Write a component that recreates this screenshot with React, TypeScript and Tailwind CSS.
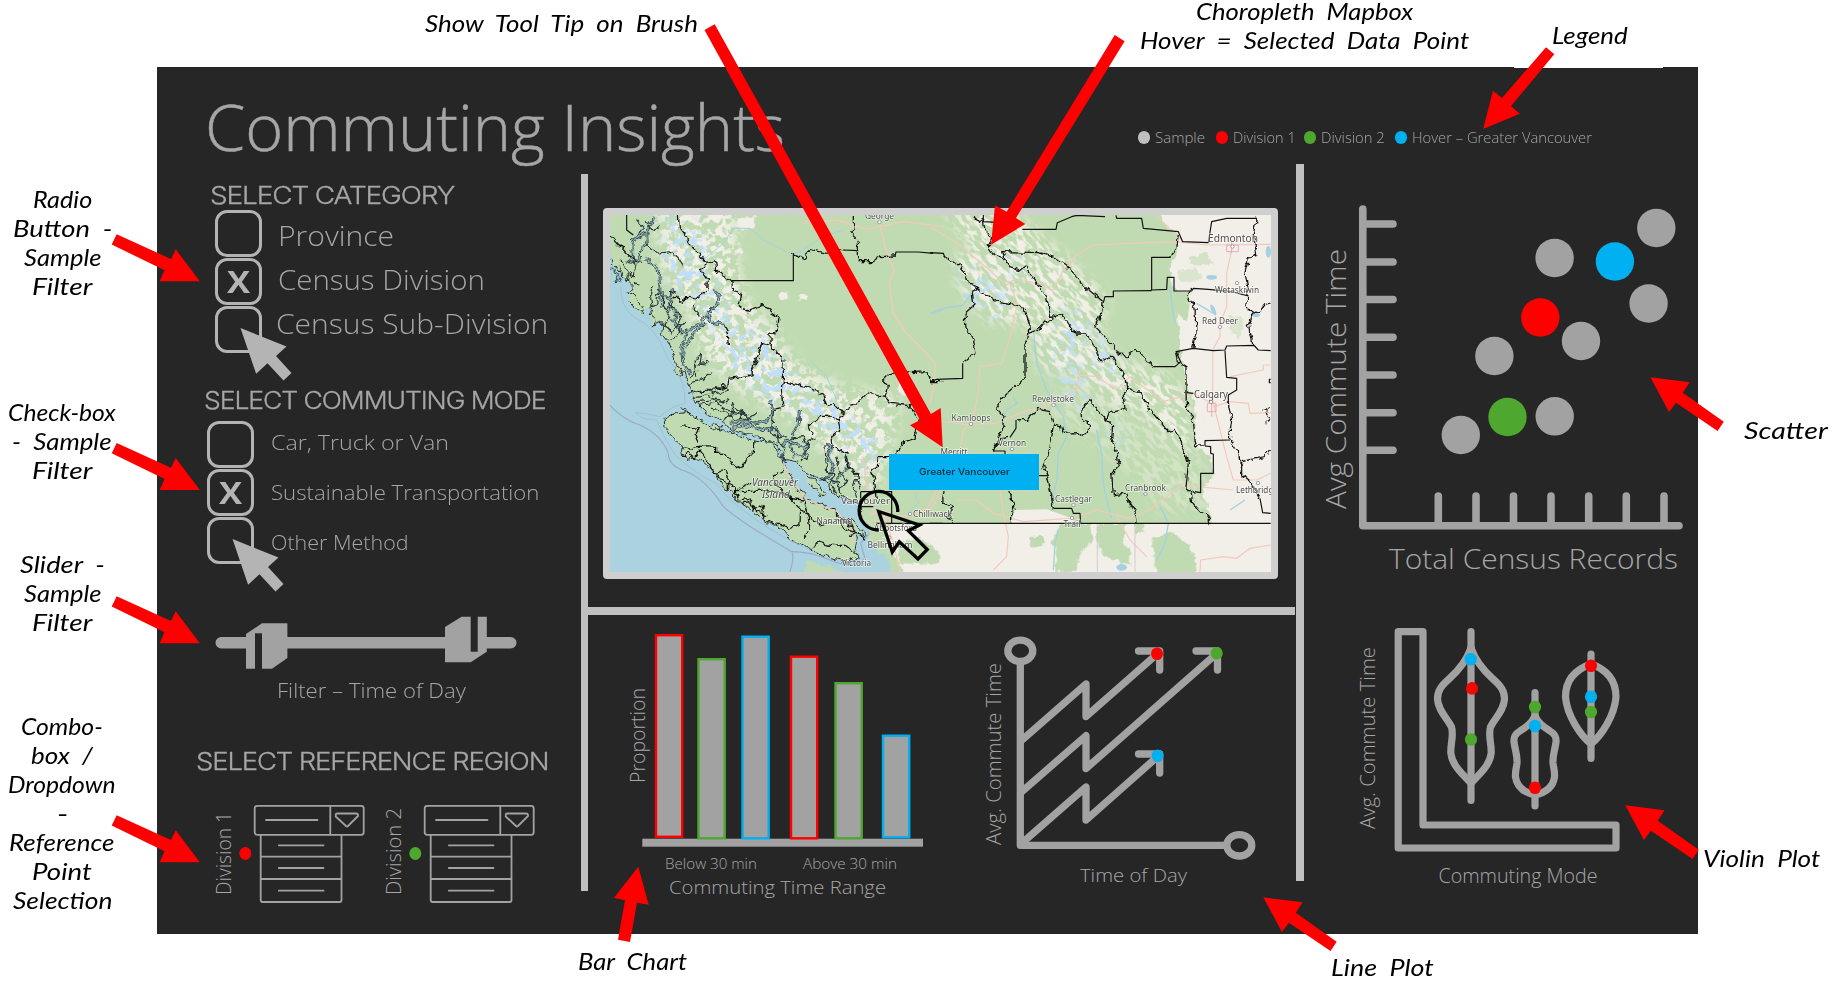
import { useLayoutEffect, useRef, useState, type ReactNode } from "react";

const RED = "#ff0000";
const GREEN = "#4ea72e";
const BLUE = "#00b0f0";
const GREY = "#a2a2a2";

/** One line of text, stretched horizontally so that it fills the given width. */
function Fit({ w, className = "", children }: { w: number; className?: string; children: ReactNode }) {
  const ref = useRef<HTMLSpanElement>(null);
  const [scale, setScale] = useState(1);
  useLayoutEffect(() => {
    if (ref.current) setScale(w / ref.current.offsetWidth);
  }, [w]);
  return (
    <span className={`block whitespace-pre ${className}`} style={{ width: w }}>
      <span ref={ref} className="inline-block origin-left" style={{ transform: `scaleX(${scale})` }}>
        {children}
      </span>
    </span>
  );
}

function ChartText({
  x,
  y,
  len,
  size,
  vertical = false,
  children,
}: {
  x: number;
  y: number;
  len: number;
  size: number;
  vertical?: boolean;
  children: string;
}) {
  return (
    <text
      className="font-['Open_Sans',sans-serif] font-light"
      fill="#a6a6a6"
      fontSize={size}
      textLength={len}
      lengthAdjust="spacingAndGlyphs"
      transform={vertical ? `translate(${x} ${y}) rotate(-90)` : `translate(${x} ${y})`}
    >
      {children}
    </text>
  );
}

/* ---------- header ---------- */

function Dot({ className }: { className: string }) {
  return <span className={`h-[13px] w-3 shrink-0 rounded-full ${className}`} />;
}

function Header() {
  return (
    <header className="flex h-[97px] shrink-0 items-start">
      <h1 className="ml-[48px] mt-[28px] font-['Open_Sans',sans-serif] text-[64px] font-light leading-[64px] text-[#a6a6a6] [-webkit-text-stroke:0.5px_#a6a6a6]">
        <Fit w={580}>Commuting Insights</Fit>
      </h1>
      <div className="ml-[353px] mt-[62px] flex items-center font-['Open_Sans',sans-serif] text-[15px] font-light leading-4 text-[#a6a6a6]">
        <Dot className="bg-[#c0c0c0]" />
        <Fit w={50} className="ml-[5px]">Sample</Fit>
        <Dot className="ml-[11px] bg-[#ff0000]" />
        <Fit w={63} className="ml-[5px]">Division 1</Fit>
        <Dot className="ml-[8px] bg-[#4ea72e]" />
        <Fit w={64} className="ml-[5px]">Division 2</Fit>
        <Dot className="ml-[10px] bg-[#00b0f0]" />
        <Fit w={180} className="ml-[5px]">Hover – Greater Vancouver</Fit>
      </div>
    </header>
  );
}

/* ---------- filters ---------- */

function Box({ checked = false }: { checked?: boolean }) {
  return (
    <div className="flex size-[47px] items-center justify-center rounded-xl border-[3.5px] border-[#b4b4b4] font-['Open_Sans',sans-serif] text-[29.500px] font-bold leading-none text-[#b4b4b4]">
      {checked ? <Fit w={23.5}>X</Fit> : null}
    </div>
  );
}

function Boxes() {
  return (
    <div className="relative flex flex-col gap-px">
      <Box />
      <Box checked />
      <Box />
      <svg className="absolute left-[25px] top-[117px]" width="54" height="55" viewBox="239.500 327 54 55">
        <path d="M240 328 L286 346.500 L275.500 356 L291 373 L283 380.500 L267 363.300 L255.600 373.700 Z" fill="#b4b4b4" />
      </svg>
    </div>
  );
}

function Heading({ w, children }: { w: number; children: string }) {
  return (
    <h2 className="font-['Inter',sans-serif] text-[24.500px] font-light leading-7 tracking-[-0.04em] text-[#a6a6a6] [-webkit-text-stroke:0.3px_#a6a6a6]">
      <Fit w={w}>{children}</Fit>
    </h2>
  );
}

function Slider() {
  return (
    <svg width="310" height="58" viewBox="212 614 310 58" fill={GREY}>
      <rect x="215.500" y="637" width="301" height="11.500" rx="5.700" />
      <path d="M246 634 L262 623.300 H287.400 V658 L272 668.700 H246 Z" />
      <rect x="255" y="633.300" width="7" height="36" fill="#262626" />
      <path d="M445 627 L461.500 616.700 H486.800 V651.700 L470.700 662.300 H445 Z" />
      <rect x="470.700" y="616" width="7" height="35.700" fill="#262626" />
    </svg>
  );
}

function RegionPicker({ label, dot }: { label: string; dot: string }) {
  return (
    <svg width="158" height="102" viewBox="210 803 158 102" fill="none" stroke={GREY} strokeWidth="1.800" strokeLinecap="round">
      <g stroke="none">
        <ChartText vertical x={230.800} y={895} len={label.endsWith("2") ? 87 : 83} size={20}>
          {label}
        </ChartText>
        <ellipse cx="245.300" cy="853.500" rx="6" ry="6.500" fill={dot} />
      </g>
      <rect x="254.700" y="805.800" width="109" height="29" rx="2.500" />
      <path d="M330.300 806 V834.500 M266 820 H317.500" />
      <path d="M335.800 816.500 V814 Q336 813.500 338 813.500 H356 Q358.300 813.500 358 816 L348 826 Q347 827 346 826 Z" />
      <path d="M260.700 835 V900 Q260.700 902 262.700 902 H339.500 Q341.500 902 341.500 900 V835 M260.700 856.700 H341.500 M260.700 879 H341.500" />
      <path d="M278.800 845.300 H323.500 M278.800 868 H323.500 M278.800 890.700 H323.500" />
    </svg>
  );
}

function Filters() {
  return (
    <section className="flex h-[770px] w-[424px] shrink-0 flex-col font-['Open_Sans',sans-serif] font-light text-[#a6a6a6]">
      <div className="ml-[53px] mt-[17px]">
        <Heading w={244}>SELECT CATEGORY</Heading>
      </div>
      <div className="ml-[58px] mt-px flex h-[143px]">
        <Boxes />
        <div className="ml-4 mt-[3px] text-[28px] leading-[44px]">
          <Fit w={116}>Province</Fit>
          <Fit w={207}>Census Division</Fit>
          <Fit w={272} className="-ml-0.5">Census Sub-Division</Fit>
        </div>
      </div>
      <div className="ml-[47px] mt-[33px]">
        <Heading w={341}>SELECT COMMUTING MODE</Heading>
      </div>
      <div className="ml-[50px] mt-[7px] flex h-[143px]">
        <Boxes />
        <div className="-mt-[4px] ml-[17px] text-[21px] leading-[50px]">
          <Fit w={178}>Car, Truck or Van</Fit>
          <Fit w={268}>Sustainable Transportation</Fit>
          <Fit w={138}>Other Method</Fit>
        </div>
      </div>
      <div className="ml-[55px] mt-[50px] h-[58px]">
        <Slider />
      </div>
      <div className="ml-[120px] mt-1.5 text-[20.500px] leading-6">
        <Fit w={189}>Filter – Time of Day</Fit>
      </div>
      <div className="ml-[39px] mt-[45px]">
        <Heading w={352}>SELECT REFERENCE REGION</Heading>
      </div>
      <div className="ml-[53px] mt-7 flex gap-[11.500px]">
        <RegionPicker label="Division 1" dot={RED} />
        <RegionPicker label="Division 2" dot={GREEN} />
      </div>
    </section>
  );
}

/* ---------- map ---------- */

const MAINLAND =
  "55,70 1100,70 1100,1150 905,1150 895,1110 860,1075 835,1050 838,1010 812,985 812,940 780,932 735,915 705,872 650,850 622,815 585,808 560,762 500,738 425,722 395,690 345,664 312,628 296,585 285,545 262,560 252,500 240,465 215,432 220,395 190,405 180,350 150,372 112,310 130,290 100,262 60,205";
const ISLAND =
  "222,688 250,672 290,668 330,690 362,712 400,722 440,735 492,750 540,757 562,778 580,822 602,862 630,905 645,930 700,945 750,975 790,1010 802,1045 795,1080 805,1100 770,1117 720,1102 660,1080 600,1048 570,1012 540,1002 505,978 470,950 432,930 430,905 400,892 378,855 350,828 320,802 288,808 272,765 245,738 225,712";

const CHANNELS = [
  "190,78 170,125 130,150 128,200 112,215",
  "170,125 172,165 148,180 150,215 128,210",
  "165,205 205,240 210,300 215,350",
  "215,310 240,330 232,370 250,395",
  "250,295 235,340 262,370 255,400 280,430",
  "375,300 388,320 380,345 352,372 330,400 290,425 275,470 278,520 300,550",
  "352,372 365,398 400,402",
  "350,395 310,430 300,455 285,470",
  "420,700 470,695 500,700 530,692 548,665 542,630",
  "425,715 470,705 520,722 555,715 575,740",
  "628,660 625,700 605,735 600,770 615,800",
  "575,770 590,750 620,765 650,770 640,800 620,790",
  "705,765 725,770 715,800 730,830 715,865 690,860",
  "770,795 775,830 755,850 730,880",
  "60,232 80,250 90,275 72,270",
];

const INLET_LINES = [
  "172,165 200,190 240,185 262,200 280,226",
  "190,285 182,320 186,350 200,345 205,300",
  "210,400 245,420 270,405 262,440 235,450",
  "222,300 220,350 240,380 225,400 245,430",
  "250,360 275,380 260,410 285,400",
  "230,340 250,350 240,300 258,310",
  "310,345 330,380",
  "300,560 320,545 315,510 335,490 330,520 350,518",
  "320,560 318,520 348,525",
  "295,580 330,570 360,548",
  "300,605 360,600 390,590",
  "295,610 330,600 375,612 415,600",
  "310,625 350,615 400,635 418,628",
  "320,635 365,630 410,640",
  "330,645 380,640 430,668 470,675",
  "360,655 400,660 440,690 490,685",
  "400,690 425,670 430,640 440,660 475,675",
  "385,600 400,580 415,600",
  "450,690 460,660 470,690 500,670",
  "550,660 545,720 560,745 590,740",
  "560,720 565,760 585,770 575,800 590,820",
  "600,745 640,740 655,775 640,790 655,800 630,815",
  "650,770 660,750 680,740",
  "705,765 710,850 735,850 720,880 740,910",
  "740,800 750,850 770,870 745,900",
  "690,870 725,865 745,880 750,915",
  "800,855 790,890 800,920",
  "140,90 160,110 150,130",
  "165,95 190,120 210,110",
  "135,280 150,290",
];

const INLETS = [
  "88,212 100,222 115,255 112,278 95,255 88,230",
  "110,305 130,315 155,345 160,368 140,358 120,335",
  "180,370 192,375 195,400 185,405",
  "255,525 270,528 278,560 262,555",
  "118,215 135,218 130,258 115,250",
  "648,862 670,865 710,910 700,922 680,900 655,882",
  "620,900 635,910 650,908 640,925",
  "68,250 80,255 88,275 75,278",
  "365,705 395,708 390,718 368,716",
  "268,657 290,660 305,668 280,665",
  "770,985 790,990 810,1015 830,1040 805,1030",
];

const ROUGH_A = [
  "60,135 110,190 140,215",
  "265,78 268,110 290,140 295,160 325,190 350,220 378,215 380,245 400,255 425,272 428,300 455,310 448,345 475,365 520,345 545,365 568,380 560,425 540,435 540,460 560,490 578,500 580,545 580,575 650,590 700,615 705,635 760,665 800,640 830,608 885,622",
  "350,220 330,240 352,270 350,300 320,325 300,320 275,335 250,320",
  "400,402 415,430 418,468",
  "540,465 515,460 500,510 485,555 440,562 415,565 410,590 370,602 325,605",
  "580,575 575,620 580,655 550,662",
  "760,665 745,690 725,678 690,680 655,705 665,735",
  "745,690 752,720 725,740 730,770 770,790 775,830 800,855 808,900",
  "275,770 310,775 340,770 380,772 380,790 405,790 430,825 455,838 465,812 490,785 492,752",
  "640,930 650,965 655,985 660,1015 640,1050",
  "580,840 550,858 555,880 600,925 640,930",
  "432,905 560,903 600,922 650,975 690,1005 740,990 790,1010",
  "665,1080 680,1055 710,1065 765,1070 790,1080",
  "885,622 895,590 878,570 900,550 965,548 1010,545 1022,575 1060,575",
  "885,622 905,640 960,648 985,690 975,745 945,755 920,790",
  "905,800 865,800 862,830 845,845 855,880 858,930",
  "275,800 300,785 310,805 330,780 345,805 375,850 405,840 420,880 435,900 480,880",
  "380,850 395,870 420,885 410,895",
  "435,905 445,930 480,925 490,960 515,945 525,985 545,1000 580,1005 600,1015 630,1000 632,958",
  "450,940 475,935 500,965 530,975",
  "270,710 330,715 315,735 325,755",
  "740,990 760,1010 800,1030 825,1045",
  "735,965 760,990 785,1000 795,1030 775,1040",
  "610,190 640,205 665,180 710,190 760,180",
  "790,78 790,115 782,130 805,152 805,215 850,215 870,200 915,198",
];

const ROUGH_B = [
  "130,78 145,95 160,88 165,120 185,140 175,165 195,195 225,205 240,230 270,240 285,228 310,265 325,285 350,320 362,385 400,375 418,405 440,432 470,432 490,465 512,515 545,498 560,520 585,560 590,595 580,620 585,655 540,665 530,690",
  "225,205 218,185 330,188 380,205 410,225 440,262 470,295 520,335 515,365 498,412 545,462 565,495 590,498 615,480 640,500 670,530",
  "40,200 85,225 110,255 115,280 145,292 155,312 205,335 270,345 288,370 298,400 295,430 285,465 285,560 245,600 215,625 200,655 222,680 218,715 202,750 190,785",
  "145,292 125,300 132,345 105,370 108,415 130,450 138,490 100,520",
  "295,430 325,420 345,395 362,390",
  "188,780 215,745 240,742",
  "258,690 290,688 325,658 360,665 370,705 365,745 355,795 340,825 350,855 362,900 370,955",
  "370,705 395,710 400,730 440,728 460,740 475,725 475,695 458,690 455,655 480,632 500,660 530,690 548,705 545,745 560,790 568,825 545,850 550,915 585,910 600,940 615,965 618,998",
  "590,590 630,610 660,660 690,695 715,725 735,718 755,760 775,820 768,895 800,910",
  "240,900 245,935 255,955 242,975 242,998",
  "42,900 38,935 68,950 55,980 68,998",
  "780,905 785,935 810,965 830,975 845,1000",
  "745,135 740,175 722,202",
  "785,295 775,325 795,355 798,430 788,470",
  "980,80 970,130 980,195 955,205 945,245 955,300 950,350 970,370 955,405 965,460 972,470",
  "970,370 990,360 1005,340 1022,336",
  "740,485 745,515 768,530 768,610 770,655 790,690 795,750 800,768 825,768",
  "895,640 905,690 898,745 925,785 935,855 965,880 990,925",
  "1022,778 1005,800 935,815",
  "1022,655 1005,660 1022,690 1010,700",
];

const STRAIGHT_A = [
  "110,75 110,120 130,135",
  "425,272 610,272 610,190",
  "760,180 805,182",
  "858,1000 1060,1000",
  "812,905 905,905 905,1000",
  "812,905 812,950 850,950",
  "915,198 918,186 985,186 1030,190",
];
const STRAIGHT_B = [
  "160,75 160,95 215,98 215,118",
  "277,118 378,118 382,98 425,80 440,76 525,80",
  "558,76 560,85 635,85 640,115 745,125 758,155 835,158 845,95 890,85 980,85",
  "722,202 665,202 665,300 710,298 712,262 732,262 732,303 785,303 790,295 835,298 905,305 955,318",
  "665,302 550,303 550,320 525,320 520,338",
  "670,530 735,530 752,515 738,485 790,475 850,482 885,480 890,468 972,466 985,480 1022,482",
  "885,482 890,562 920,565 920,600 895,615 895,640",
  "770,608 790,610",
  "825,768 825,752 900,750",
  "825,768 842,770 842,790 850,792 850,850 812,850 812,908 795,905",
  "935,815 935,855",
  "990,925 998,968 1022,970",
  "0,575 20,568 98,565 98,520",
  "370,955 425,955 430,970 450,970 452,1000",
  "0,1000 1022,1000",
  "325,857 355,857",
  "190,783 225,783 225,795",
  "240,742 258,715 258,690",
  "0,188 40,190 45,203",
  "1022,568 1018,568 1018,578 1022,578",
];

const ROADS_A = [
  "868,95 885,170 912,240 898,280 910,370 950,430 1000,480 1035,520 1032,580 1020,640",
  "868,110 830,118 740,90 640,100",
  "868,110 940,95 1060,110",
  "580,820 600,865 650,930 740,965 780,1010 790,1060",
  "820,800 828,880 850,960 890,985 960,975 1010,960 1040,900",
  "880,970 910,1060 930,1145",
  "840,975 880,960 905,975 895,1005 850,990",
];
const ROADS_B = [
  "0,110 90,165 160,225 230,285 250,270 300,275 370,300 400,240 440,195 490,165 600,160 740,155 830,165 1022,163",
  "240,285 262,340 240,440 215,520 150,530 145,600 130,690 100,720 90,780",
  "0,690 120,705 200,700 270,670 370,640 440,600 450,555 500,560 560,600 600,560 700,635 790,610 845,640",
  "208,800 210,900 220,970 235,1040 230,1100 190,1140",
  "905,180 890,250 890,350 870,400 870,440 848,480 848,630 870,720 890,800 910,870 980,870 1022,850",
  "850,650 900,635 955,640 960,670 1022,668",
  "0,960 20,930 30,900",
  "80,930 140,930 190,970 280,995 420,985 500,960 600,985 660,960 760,880 800,890 910,900",
  "560,980 600,1050 650,1100",
  "760,155 680,78",
  "900,560 1000,540 1000,525 1022,525",
  "810,1145 812,1110 880,1100 920,1105 960,1075 1022,1065",
];
const RIVERS_A = [
  "340,210 400,160 430,115 480,115 520,150 600,190 650,185",
  "620,190 700,140 760,120",
  "660,510 710,560 740,630",
  "1030,370 1060,360",
  "925,1000 985,940 975,910",
];
const RIVERS_B = [
  "0,370 40,355 100,345 130,300",
  "310,420 320,520 350,600 400,680 410,740 385,790 380,870 365,940",
  "500,720 515,790 520,880 530,930 545,985",
  "720,290 728,360 735,400",
  "690,950 715,1000 705,1060 680,1110",
  "215,700 230,660 260,640 250,620",
  "385,1020 375,1060 370,1140",
  "900,960 945,930",
  "800,340 850,370",
];

function Lines({ list }: { list: string[] }) {
  return (
    <>
      {list.map((p) => (
        <polyline key={p} points={p} />
      ))}
    </>
  );
}

const CITIES: [string, number, number, number, number][] = [
  ["George", 865, 219, 29, 9],
  ["Vancouver", 841, 504, 49, 9.5],
  ["Nanaimo", 816.5, 524, 36, 8.5],
  ["Victoria", 842, 566, 29, 8.5],
  ["Abbotsford", 874, 531, 43, 8.5],
  ["Bellingham", 867.5, 548, 45, 8.5],
  ["Chilliwack", 913, 517, 39, 8.5],
  ["Kamloops", 951.5, 421, 39, 8.5],
  ["Merritt", 940.5, 455, 27, 8.5],
  ["Vernon", 998, 446, 28, 8.5],
  ["Revelstoke", 1032, 401.500, 42, 8.5],
  ["Cranbrook", 1125, 490.500, 41, 8.5],
  ["Castlegar", 1055, 502, 37, 8.5],
  ["Trail", 1063.500, 527, 17, 8.5],
  ["Edmonton", 1208, 242, 50, 10.5],
  ["Wetaskiwin", 1215, 292.500, 44, 8.5],
  ["Red Deer", 1202, 324, 36, 9],
  ["Calgary", 1194, 398, 34, 10.5],
  ["Lethbridge", 1236, 493, 42, 8.5],
];

function MapView() {
  return (
    <svg className="block" width="661" height="357" viewBox="610 215 661 357" preserveAspectRatio="none">
      <defs>
        <filter id="rough" colorInterpolationFilters="sRGB" filterUnits="userSpaceOnUse" x="600" y="205" width="690" height="380">
          <feTurbulence type="fractalNoise" baseFrequency="0.16" numOctaves="2" seed="4" />
          <feDisplacementMap in="SourceGraphic" scale="7" xChannelSelector="R" yChannelSelector="G" />
        </filter>
        <filter id="soft" filterUnits="userSpaceOnUse" x="600" y="205" width="690" height="380">
          <feGaussianBlur stdDeviation="7" />
        </filter>
        <filter id="snow" colorInterpolationFilters="sRGB" filterUnits="userSpaceOnUse" x="600" y="205" width="690" height="380">
          <feTurbulence type="fractalNoise" baseFrequency="0.13" numOctaves="3" seed="11" />
          <feColorMatrix values="0 0 0 0 0.945  0 0 0 0 0.937  0 0 0 0 0.9  9 0 0 0 -4" />
        </filter>
        <filter id="ridges" colorInterpolationFilters="sRGB" filterUnits="userSpaceOnUse" x="300" y="-600" width="1500" height="1600">
          <feTurbulence type="fractalNoise" baseFrequency="0.09 0.22" numOctaves="3" seed="7" />
          <feColorMatrix values="0 0 0 0 0.945  0 0 0 0 0.937  0 0 0 0 0.9  7 0 0 0 -3.1" />
        </filter>
        <filter id="ice" colorInterpolationFilters="sRGB" filterUnits="userSpaceOnUse" x="600" y="205" width="690" height="380">
          <feTurbulence type="fractalNoise" baseFrequency="0.13" numOctaves="3" seed="23" />
          <feColorMatrix values="0 0 0 0 0.75  0 0 0 0 0.87  0 0 0 0 0.98  0 12 0 0 -6.3" />
        </filter>
        <mask id="coastRange" maskUnits="userSpaceOnUse" x="600" y="205" width="690" height="380">
          <g filter="url(#soft)">
            <polygon
              transform="translate(590 190) scale(.33333)"
              fill="#fff"
              points="200,40 440,40 440,220 470,330 560,420 620,520 760,590 930,620 900,780 850,930 800,860 720,800 600,690 440,600 340,500 300,380 210,230"
            />
          </g>
        </mask>
        <mask id="iceMask" maskUnits="userSpaceOnUse" x="600" y="205" width="690" height="380">
          <g filter="url(#soft)">
            <g transform="translate(590 190) scale(.33333)" fill="#fff">
              <polygon points="220,90 320,90 370,250 420,400 520,430 640,600 760,660 870,760 830,850 720,720 560,640 420,540 340,330 230,280" />
            </g>
            <g transform="translate(930 190) scale(.33333)" fill="#fff">
              <polygon points="80,220 160,260 240,330 200,390 120,340" />
              <polygon points="370,360 440,370 520,460 580,520 560,570 470,480 400,450" />
              <polygon points="370,470 430,470 480,620 450,660 380,600" />
              <polygon points="210,190 260,220 280,260 230,250" />
              <polygon points="530,690 570,710 570,790 535,760" />
            </g>
          </g>
        </mask>
        <mask id="rockies" maskUnits="userSpaceOnUse" x="300" y="0" width="1300" height="900">
          <g filter="url(#soft)">
            <g transform="translate(930 190) scale(.33333)" fill="#fff">
              <polygon points="40,60 240,60 420,210 540,330 500,420 570,510 680,540 760,600 780,780 720,740 640,660 560,640 440,560 330,540 290,400 180,400 90,300 70,200 130,180" />
              <polygon points="440,560 780,600 850,960 700,980 640,900 560,820 440,720 330,660" opacity="0.4" />
            </g>
          </g>
        </mask>
      </defs>

      <rect x="600" y="205" width="690" height="380" fill="#aad3df" />
      <g filter="url(#rough)">
        <g transform="translate(590 190) scale(.33333)" fill="#c0dbb1" stroke="#26302c" strokeWidth="3">
          <polygon points={MAINLAND} stroke="none" />
          <polyline points="60,205 100,262 130,290 112,310" fill="none" />
          <polyline
            points="180,350 190,405 220,395 215,432 240,465 252,500 262,560 285,545 296,585 312,628 345,664 395,690 425,722 500,738 560,762 585,808 622,815 650,850 705,872 735,915 780,932 812,940 812,985"
            fill="none"
          />
          <polygon points={ISLAND} />
          <polygon points="640,1155 650,1110 700,1125 770,1150" stroke="none" />
          <Lines list={INLETS} />
        </g>
      </g>
      <rect x="915" y="215" width="360" height="308" fill="#c0dbb1" />
      <g transform="translate(930 190) scale(.33333)" fill="#f2efe9">
        <rect x="-30" y="1000" width="1060" height="160" />
        <polygon points="255,960 350,958 425,985 440,1001 240,1001" />
      </g>
      <g filter="url(#rough)">
        <polygon
          transform="translate(930 190) scale(.33333)"
          fill="#f2efe9"
          points="680,20 700,100 740,130 745,180 715,240 735,300 785,303 770,400 740,370 750,470 765,560 795,640 800,770 840,800 850,860 815,900 850,1003 1080,1003 1080,20"
        />
        <g transform="translate(590 190) scale(.33333)">
          <polygon points="905,1003 1060,1003 1060,1160 945,1160 930,1120 900,1080 880,1040" fill="#f2efe9" />
          <polygon points="920,1060 990,1040 1050,1090 1050,1120 930,1120" fill="#c0dbb1" />
          <polygon points="440,85 495,80 495,110 465,125 440,105" fill="#f2efe9" />
          <ellipse cx="580" cy="318" rx="14" ry="14" fill="#f2efe9" />
          <ellipse cx="640" cy="322" rx="14" ry="8" fill="#f2efe9" />
          <ellipse cx="445" cy="185" rx="12" ry="7" fill="#f2efe9" />
          <ellipse cx="940" cy="590" rx="16" ry="24" fill="#f2efe9" />
        </g>
        <g transform="translate(930 190) scale(.33333)" fill="#c0dbb1">
          <polygon points="390,1002 480,1002 490,1050 450,1090 440,1145 375,1145 380,1080 365,1060" />
          <polygon points="505,1002 590,1002 575,1060 600,1080 600,1130 560,1110 520,1100 500,1050" />
          <polygon points="665,1045 720,1025 770,1060 800,1100 800,1170 690,1170 670,1100" />
          <polygon points="295,1040 340,1040 340,1065 300,1070" />
          <polygon points="610,1002 640,1002 640,1030 612,1030" />
          <polygon points="780,200 830,190 850,220 790,225" opacity="0.6" />
          <polygon points="740,240 800,235 820,270 750,275" opacity="0.5" />
          <polygon points="900,375 940,385 930,450 905,430" opacity="0.5" />
        </g>
      </g>
      <g mask="url(#coastRange)">
        <rect x="600" y="205" width="690" height="318" filter="url(#snow)" />
      </g>
      <g mask="url(#rockies)">
        <g transform="rotate(46 1090 360)">
          <rect x="300" y="-600" width="1500" height="1600" filter="url(#ridges)" />
        </g>
      </g>
      <g mask="url(#iceMask)">
        <rect x="600" y="205" width="690" height="318" filter="url(#ice)" />
      </g>

      <g fill="none" strokeLinejoin="round">
        <g transform="translate(590 190) scale(.33333)">
          <g stroke="#a6d1e3" strokeWidth="3">
            <Lines list={RIVERS_A} />
          </g>
          <g stroke="#f3c9bb" strokeWidth="4">
            <Lines list={ROADS_A} />
          </g>
          <g stroke="#9fa9c4" strokeWidth="3.500">
            <path d="M60 646 Q100 690 150 705 Q215 735 235 790 Q235 830 290 845 Q350 870 400 950 Q460 1000 530 1040 L605 1085 Q660 1085 720 1110 Q790 1140 825 1105 L812 1060 L838 1030" />
            <path d="M607 1088 Q612 1110 600 1145" />
          </g>
          <g stroke="#a3bccd" strokeWidth="2.500">
            <path d="M92 290 Q92 350 130 380 Q200 410 230 500 Q290 570 285 640 Q240 650 210 680 Q170 670 138 668 Q150 690 200 690 Q230 760 260 800 Q330 860 380 880 Q410 930 500 990 Q570 1040 640 1070" />
          </g>
        </g>
        <g transform="translate(930 190) scale(.33333)">
          <g stroke="#a3d2de" strokeWidth="4">
            <Lines list={RIVERS_B} />
          </g>
          <g stroke="#f3c9bb" strokeWidth="3.500">
            <Lines list={ROADS_B} />
          </g>
          <g stroke="#efa9b4" strokeWidth="3">
            <path d="M890 165 H925 V185 H890 Z M905 150 V190 M832 640 H858 V665 H832 Z M845 625 V680" />
          </g>
          <path d="M502 1002 V1145 M615 1002 V1145" stroke="#cfc3cf" strokeWidth="2.500" />
        </g>
      </g>
      <g fill="#a6d1e3" transform="translate(930 190) scale(.33333)">
        <ellipse cx="845" cy="262" rx="16" ry="7" />
        <ellipse cx="1015" cy="185" rx="8" ry="18" />
        <ellipse cx="850" cy="360" rx="6" ry="18" transform="rotate(-25 850 360)" />
        <ellipse cx="978" cy="375" rx="12" ry="6" />
        <ellipse cx="575" cy="1132" rx="16" ry="10" />
      </g>

      <g fill="none" stroke="#111" strokeLinejoin="round">
        <g filter="url(#rough)">
          <g transform="translate(590 190) scale(.33333)">
            <g stroke="#26333a" strokeWidth="8">
              <Lines list={CHANNELS} />
            </g>
            <g stroke="#8fb9c6" strokeWidth="4">
              <Lines list={CHANNELS} />
            </g>
            <g stroke="#26333a" strokeWidth="3.600">
              <Lines list={INLET_LINES} />
            </g>
            <g strokeWidth="3.800">
              <Lines list={ROUGH_A} />
            </g>
          </g>
          <g transform="translate(930 190) scale(.33333)" strokeWidth="3.800">
            <Lines list={ROUGH_B} />
          </g>
        </g>
        <g transform="translate(590 190) scale(.33333)" strokeWidth="3.500">
          <Lines list={STRAIGHT_A} />
        </g>
        <g transform="translate(930 190) scale(.33333)" strokeWidth="3.500">
          <Lines list={STRAIGHT_B} />
        </g>
      </g>

      <g
        className="font-['Noto_Sans',sans-serif]"
        fill="#4c4c4c"
        stroke="#ffffff"
        strokeOpacity="0.6"
        strokeWidth="1.500"
        paintOrder="stroke"
      >
        {CITIES.map(([name, x, y, len, size]) => (
          <text key={name} x={x} y={y} fontSize={size} textLength={len} lengthAdjust="spacingAndGlyphs">
            {name}
          </text>
        ))}
        <text x="752" y="486" fontSize="10.500" fontStyle="italic" textLength="46" lengthAdjust="spacingAndGlyphs">
          Vancouver
        </text>
        <text x="762" y="498" fontSize="10.500" fontStyle="italic" textLength="28" lengthAdjust="spacingAndGlyphs">
          Island
        </text>
      </g>
      <g fill="#fff" stroke="#8a8a8a" strokeWidth="0.800">
        {[
          [879.5, 222],
          [971, 424],
          [1012, 449],
          [1053.5, 405],
          [1145.5, 494],
          [1073.5, 505],
          [1072, 518],
          [1232.5, 246.5],
          [1237, 283],
          [1220, 327],
          [1211, 402],
          [1258, 483],
          [910, 514],
          [889, 537.5],
        ].map(([cx, cy]) => (
          <circle key={`${cx}-${cy}`} cx={cx} cy={cy} r="1.700" />
        ))}
      </g>

      <g fill="none" stroke="#000" strokeWidth="3.300" strokeLinejoin="miter">
        <path d="M897.700 512 A19.300 19.300 0 1 0 878.700 530" />
        <path d="M878.700 511.500 L919.500 525 L908.300 530.700 L927.300 549.500 L918 559 L899.300 541.700 L892.300 552 Z" />
      </g>
    </svg>
  );
}

function MapPanel() {
  return (
    <div className="relative ml-[15px] mt-11 h-[371px] w-[675px] shrink-0 rounded border-[7px] border-[#cfcfcf]">
      <div className="h-full w-full overflow-hidden">
        <MapView />
      </div>
      <div className="absolute left-[279px] top-[239px] flex h-9 w-[150px] items-center justify-center bg-[#00b0f0] font-['Inter',sans-serif] text-[9px] font-medium text-[#0d2b3a]">
        <Fit w={91}>Greater Vancouver</Fit>
      </div>
    </div>
  );
}

/* ---------- charts ---------- */

const BARS = [
  { x: 655, top: 634, bottom: 838, color: RED },
  { x: 697.5, top: 658, bottom: 839.5, color: GREEN },
  { x: 741.5, top: 635.5, bottom: 839.5, color: BLUE },
  { x: 790, top: 655.5, bottom: 839.5, color: RED },
  { x: 834.5, top: 682, bottom: 839.5, color: GREEN },
  { x: 882, top: 734.5, bottom: 838.5, color: BLUE },
];

function BarChart() {
  return (
    <svg width="352" height="286" viewBox="588 615 352 286">
      <rect x="642.300" y="838.700" width="280.700" height="8" fill={GREY} />
      {BARS.map((b) => (
        <rect
          key={b.x}
          x={b.x + 1}
          y={b.top + 1.2}
          width={26.2}
          height={b.bottom - b.top - 2.4}
          fill={GREY}
          stroke={b.color}
          strokeWidth="2.400"
        />
      ))}
      <ChartText vertical x={644.700} y={783} len={95} size={19.500}>Proportion</ChartText>
      <ChartText x={665} y={868.700} len={92} size={15}>Below 30 min</ChartText>
      <ChartText x={803} y={868.700} len={94} size={15}>Above 30 min</ChartText>
      <ChartText x={669} y={894} len={217} size={19}>Commuting Time Range</ChartText>
    </svg>
  );
}

function LineChart() {
  return (
    <svg width="340" height="286" viewBox="956 615 340 286">
      <g fill="none" stroke={GREY} strokeWidth="7.300" strokeLinejoin="round" strokeLinecap="round">
        <path d="M1020.300 664 V845.300 H1225" />
        <ellipse cx="1020.300" cy="650.800" rx="12.500" ry="10.700" />
        <ellipse cx="1239.300" cy="845.300" rx="12.500" ry="10.700" />
        <path d="M1022 740 L1086 684 V716.500 L1156 655 M1138.500 651 H1159.700 V670" />
        <path d="M1022 791.500 L1086 735.700 V768.500 L1215 655 M1196 651 H1217.500 V670" />
        <path d="M1022 843 L1086 787 V820 L1156 758 M1138.500 754 H1159.700 V773" />
      </g>
      <ellipse cx="1157" cy="653.700" rx="6" ry="6.300" fill={RED} />
      <ellipse cx="1216.700" cy="653.300" rx="6" ry="6.300" fill={GREEN} />
      <ellipse cx="1157.600" cy="755.700" rx="6" ry="6.300" fill={BLUE} />
      <ChartText vertical x={1000.700} y={845} len={182} size={19.500}>Avg. Commute Time</ChartText>
      <ChartText x={1080} y={881.700} len={107} size={19}>Time of Day</ChartText>
    </svg>
  );
}

const POINTS: [number, number, string][] = [
  [1656.3, 228, GREY],
  [1554.6, 258, GREY],
  [1614.9, 261.5, BLUE],
  [1648.6, 303.5, GREY],
  [1540.3, 317.5, RED],
  [1581, 341, GREY],
  [1494.4, 356, GREY],
  [1507.5, 417, GREEN],
  [1554.7, 416.3, GREY],
  [1460.8, 435, GREY],
];

function ScatterPlot() {
  return (
    <svg className="block" width="394" height="440" viewBox="1304 164 394 440">
      <g fill="none" stroke={GREY} strokeWidth="7.600" strokeLinecap="round" strokeLinejoin="round">
        <path d="M1362.800 209 V525.700 H1679" />
        {[224, 262, 299.500, 337.300, 375, 412.700, 450.300].map((y) => (
          <path key={y} d={`M1363 ${y} H1393`} />
        ))}
        {[1438.300, 1476, 1513.500, 1551, 1588.700, 1626.300, 1664].map((x) => (
          <path key={x} d={`M${x} 525 V496`} />
        ))}
      </g>
      {POINTS.map(([x, y, c]) => (
        <ellipse key={`${x}-${y}`} cx={x} cy={y} rx="19.200" ry="19.300" fill={c} />
      ))}
      <ChartText vertical x={1346.200} y={509} len={260} size={27.500}>Avg Commute Time</ChartText>
      <ChartText x={1389} y={568.500} len={289} size={28}>Total Census Records</ChartText>
    </svg>
  );
}

const VIOLIN_DOTS: [number, number, string][] = [
  [1470.7, 659.3, BLUE],
  [1472, 688.4, RED],
  [1471, 739.5, GREEN],
  [1535, 707, GREEN],
  [1535, 726, BLUE],
  [1535, 787.7, RED],
  [1591, 665.7, RED],
  [1591, 696.7, BLUE],
  [1591, 712, GREEN],
];

function ViolinPlot() {
  return (
    <svg className="block" width="394" height="300" viewBox="1304 604 394 300">
      <g fill="none" stroke={GREY} strokeWidth="7.200" strokeLinecap="round" strokeLinejoin="round">
        <path d="M1398.200 631.700 H1423 V825 H1616 V848 H1398.200 Z" />
        <path d="M1471 631.500 V800.500 M1535 692.500 V806 M1591 654 V758.500" />
        <path d="M1471 648 C1466 662 1458 671 1449 679 C1441 686 1437.500 691 1437.500 699 C1438 711 1448 719 1451.500 727 C1454 735 1450.500 743 1450.800 753 C1452 765 1462 774 1471 783" />
        <path d="M1471 648 C1476 662 1484 671 1493 679 C1501 686 1504.500 691 1504.500 699 C1504 711 1494 719 1490.500 727 C1488 735 1491.500 743 1491.200 753 C1490 765 1480 774 1471 783" />
        <path d="M1535 716 C1531 724 1526 727 1520 731 C1515 734 1513.500 737 1514 742 C1515 750 1517.500 755 1517 763 C1516.500 768 1515 771 1515.500 777 C1517 788 1526 793 1535 795" />
        <path d="M1535 716 C1539 724 1544 727 1550 731 C1555 734 1556.500 737 1556 742 C1555 750 1552.500 755 1553 763 C1553.500 768 1555 771 1554.500 777 C1553 788 1544 793 1535 795" />
        <path d="M1591 664 C1574 670 1565.500 681 1565.500 697 C1567 716 1581 736 1591 744" />
        <path d="M1591 664 C1608 670 1616 681 1616 697 C1614.500 716 1601 736 1591 744" />
      </g>
      {VIOLIN_DOTS.map(([x, y, c]) => (
        <ellipse key={`${x}-${y}`} cx={x} cy={y} rx="6.100" ry="6.300" fill={c} />
      ))}
      <ChartText vertical x={1374.500} y={829} len={182} size={19.500}>Avg. Commute Time</ChartText>
      <ChartText x={1438.500} y={882.700} len={159} size={19.500}>Commuting Mode</ChartText>
    </svg>
  );
}

/* ---------- annotations ---------- */

const LEFT_ARROW = "116.7,234.3 111.7,244.500 164.500,270.300 159.600,281.300 199.800,281.300 175.700,249.300 171,259";
const RIGHT_ARROW = "1650.400,377.300 1689.700,382.300 1682.800,392.700 1723.800,421.700 1717.600,431 1676,402.700 1669,412";

function Arrows() {
  return (
    <svg className="absolute left-0 top-0" width="1836" height="988" viewBox="0 0 1836 988" fill={RED}>
      {[0, 208.700, 362, 581].map((dy) => (
        <polygon key={dy} points={LEFT_ARROW} transform={`translate(0 ${dy})`} />
      ))}
      <polygon points={RIGHT_ARROW} />
      <polygon points={RIGHT_ARROW} transform="translate(-25.100 428)" />
      <polygon points={RIGHT_ARROW} transform="translate(-387.100 520)" />
      <polygon points="714.700,24.300 704.500,30 920,420 910,425.300 942.700,447.300 940.700,408 931,414" />
      <polygon points="1114.700,35 1124.600,41.300 1016,218 1025.300,224 991,244.700 995,205.300 1006.700,211.700" />
      <polygon points="1546,47.300 1554.300,54.300 1511,106 1519.800,113.700 1483.200,129 1493,90.700 1502,98" />
      <polygon points="638.300,866.700 648.700,904.700 637,902.700 630,942 618,939.700 625,900.300 614,897.700" />
    </svg>
  );
}

/** Hand-written note; lines are [text, width] pairs, `base` is the first baseline. */
function Note({ cx, base, lines }: { cx: number; base: number; lines: [string, number][] }) {
  return (
    <div
      className="absolute flex w-[400px] -translate-x-1/2 flex-col items-center font-['Lato',cursive] text-[23.500px] italic leading-[29px] text-black"
      style={{ left: cx, top: base - 22.2 }}
    >
      {lines.map(([text, w]) => (
        <Fit key={text} w={w}>{text}</Fit>
      ))}
    </div>
  );
}

function Notes() {
  return (
    <>
      <Note cx={62} base={207} lines={[["Radio", 59], ["Button  -", 99], ["Sample", 77], ["Filter", 60]]} />
      <Note cx={62} base={420} lines={[["Check-box", 108], ["-  Sample", 100], ["Filter", 60]]} />
      <Note cx={62} base={572} lines={[["Slider  -", 85], ["Sample", 77], ["Filter", 60]]} />
      <Note
        cx={62}
        base={734}
        lines={[["Combo-", 82], ["box  /", 62], ["Dropdown", 108], ["-", 11], ["Reference", 106], ["Point", 60], ["Selection", 99]]}
      />
      <Note cx={561} base={31} lines={[["Show  Tool  Tip  on  Brush", 273]]} />
      <Note cx={1304} base={19} lines={[["Choropleth  Mapbox", 217], ["Hover  =  Selected  Data  Point", 329]]} />
      <Note cx={1590} base={43} lines={[["Legend", 76]]} />
      <Note cx={1786} base={438} lines={[["Scatter", 84]]} />
      <Note cx={1761.500} base={866} lines={[["Violin  Plot", 117]]} />
      <Note cx={1382} base={975} lines={[["Line  Plot", 103]]} />
      <Note cx={632} base={969} lines={[["Bar  Chart", 109]]} />
    </>
  );
}

export default function App() {
  return (
    <main className="relative h-[988px] w-[1836px] overflow-hidden bg-white pl-[157px] pt-[67px]">
      <div className="relative flex h-[867px] w-[1541px] flex-col bg-[#262626]">
        <span className="absolute left-[1357px] top-0 h-px w-[149px] bg-white" />
        <Header />
        <div className="flex h-[770px]">
          <Filters />
          <div className="mt-2.5 h-[717px] w-[7px] shrink-0 bg-[#c0c0c0]" />
          <section className="flex w-[708px] shrink-0 flex-col">
            <MapPanel />
            <div className="mt-7 h-2 w-[707px] shrink-0 bg-[#c0c0c0]" />
            <div className="flex gap-4">
              <BarChart />
              <LineChart />
            </div>
          </section>
          <div className="h-[717px] w-2 shrink-0 bg-[#c0c0c0]" />
          <section className="flex w-[394px] shrink-0 flex-col">
            <ScatterPlot />
            <ViolinPlot />
          </section>
        </div>
      </div>
      <Arrows />
      <Notes />
    </main>
  );
}
